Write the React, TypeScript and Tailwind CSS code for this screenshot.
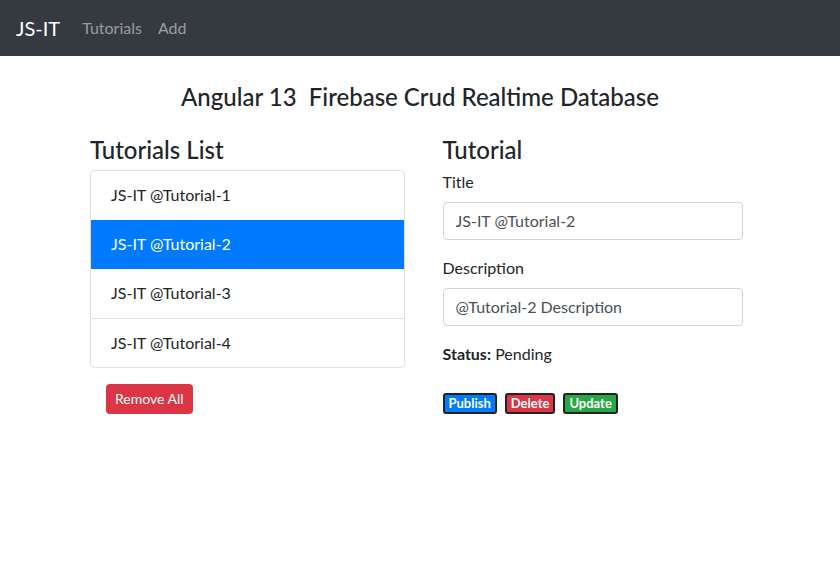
import React from 'react';

const tutorials = ['JS-IT @Tutorial-1', 'JS-IT @Tutorial-2', 'JS-IT @Tutorial-3', 'JS-IT @Tutorial-4'];

export default function App() {
  const active = 1;
  return (
    <div className="min-h-[574px] bg-white text-[#212529] font-['Lato','Open_Sans',sans-serif] text-base">
      {/* Navbar */}
      <nav className="h-14 bg-[#343a40] flex items-center px-4">
        <a className="text-white text-xl mr-[14px] pr-2">JS-IT</a>
        <div className="flex gap-4 text-base text-white/50">
          <a>Tutorials</a>
          <a>Add</a>
        </div>
      </nav>

      <div className="w-[720px] mx-auto px-[15px] pt-[27px]">
        <h4 className="text-center text-2xl font-medium leading-[1.2] mb-6">
          Angular 13&nbsp; Firebase Crud Realtime Database
        </h4>

        <div className="flex">
          {/* Left column */}
          <div className="w-1/2 px-[15px]">
            <h4 className="text-2xl font-medium leading-[1.2] mb-[5px]">Tutorials List</h4>
            <ul className="border border-black/[.125] rounded">
              {tutorials.map((t, i) => (
                <li
                  key={t}
                  className={
                    'h-[49px] flex items-center px-5 ' +
                    (i === active ? 'bg-[#007bff] text-white' : '') +
                    (i > 0 && i !== active && i - 1 !== active ? ' border-t border-black/[.125]' : '')
                  }
                >
                  {t}
                </li>
              ))}
            </ul>
            <button className="mx-4 mt-[16px] h-[30px] px-[9px] bg-[#dc3545] text-white text-sm rounded">
              Remove All
            </button>
          </div>

          {/* Right column */}
          <div className="w-1/2 px-[15px]">
            <div className="max-w-[300px] mx-auto">
              <h4 className="text-2xl font-medium leading-[1.2] mb-[5px]">Tutorial</h4>
              <div className="mb-4">
                <label className="block mb-2">Title</label>
                <input
                  className="w-full h-[38px] px-3 border border-[#ced4da] rounded text-[#495057] outline-none"
                  defaultValue="JS-IT @Tutorial-2"
                />
              </div>
              <div className="mb-4">
                <label className="block mb-2">Description</label>
                <input
                  className="w-full h-[38px] px-3 border border-[#ced4da] rounded text-[#495057] outline-none"
                  defaultValue="@Tutorial-2 Description"
                />
              </div>
              <div className="mb-4">
                <label>
                  <strong>Status:</strong>
                </label>{' '}
                Pending
              </div>
              <div className="flex gap-2 pt-[11px]">
                <button className="h-[21px] px-[4px] bg-[#007bff] text-white text-[13px] font-bold border-2 border-[#222] rounded-[3px] leading-none">
                  Publish
                </button>
                <button className="h-[21px] px-[4px] bg-[#dc3545] text-white text-[13px] font-bold border-2 border-[#222] rounded-[3px] leading-none">
                  Delete
                </button>
                <button className="h-[21px] px-[4px] bg-[#28a745] text-white text-[13px] font-bold border-2 border-[#222] rounded-[3px] leading-none">
                  Update
                </button>
              </div>
            </div>
          </div>
        </div>
      </div>
    </div>
  );
}
